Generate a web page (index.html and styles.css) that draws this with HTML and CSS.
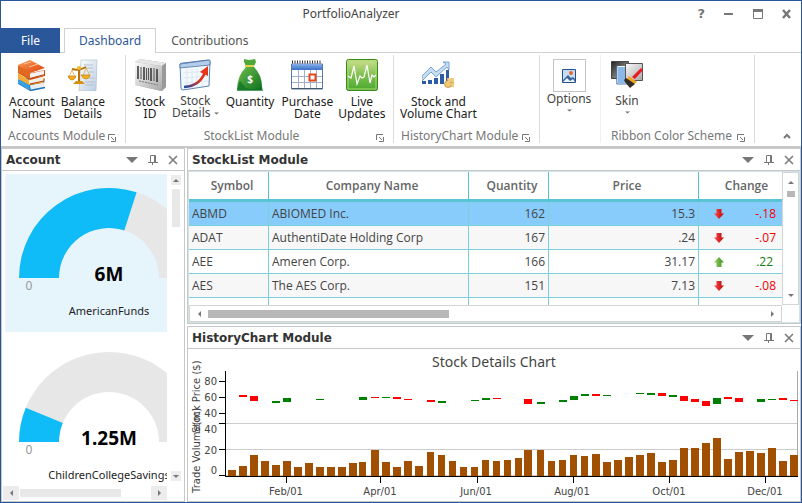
FILE: index.html
```html
<!DOCTYPE html>
<html lang="en">
<head>
<meta charset="utf-8">
<title>PortfolioAnalyzer</title>
<link rel="stylesheet" href="styles.css">
</head>
<body>
<svg class="defs" aria-hidden="true">
  <symbol id="launcher" viewBox="0 0 8 8"><path d="M0.5 6V0.5H7M3 3l3 3M7.5 3v4.500H3" fill="none" stroke="#777"/></symbol>
  <symbol id="tri" viewBox="0 0 12 6"><path d="M0 0h12L6 6z" fill="#777"/></symbol>
  <symbol id="pin" viewBox="0 0 10 10"><path d="M2.500 7V.5h5V7M6.500 1v6M0 7.500h10M4.500 7v3" fill="none" stroke="#777"/></symbol>
  <symbol id="cross" viewBox="0 0 10 10"><path d="M1 1l8 8M9 1l-8 8" fill="none" stroke="#777" stroke-width="1.500"/></symbol>
  <symbol id="up" viewBox="0 0 10 10"><path d="M2 7h6L5 4z" fill="#777"/></symbol>
  <symbol id="down" viewBox="0 0 10 10"><path d="M2 4h6L5 7z" fill="#777"/></symbol>
  <symbol id="left" viewBox="0 0 10 10"><path d="M7 2v6L4 5z" fill="#777"/></symbol>
  <symbol id="right" viewBox="0 0 10 10"><path d="M4 2v6l3-3z" fill="#777"/></symbol>
  <symbol id="fall" viewBox="0 0 10 10"><path d="M2.500 0h5v4.500H10L5 10 0 4.500h2.500z" fill="url(#redg)"/></symbol>
  <symbol id="rise" viewBox="0 0 10 10"><path d="M2.500 10h5V5.500H10L5 0 0 5.500h2.500z" fill="url(#greeng)"/></symbol>
  <defs>
    <linearGradient id="redg"><stop offset=".2" stop-color="#f04040"/><stop offset="1" stop-color="#b80000"/></linearGradient>
    <linearGradient id="greeng"><stop offset="0" stop-color="#98d060"/><stop offset="1" stop-color="#3c9020"/></linearGradient>
    <linearGradient id="orange" x2="1" y2="1"><stop offset="0" stop-color="#ffa060"/><stop offset="1" stop-color="#d84008"/></linearGradient>
    <linearGradient id="silver" x2="1" y2="1"><stop offset="0" stop-color="#fafafa"/><stop offset="1" stop-color="#a8a8a8"/></linearGradient>
    <linearGradient id="paper" x2="1" y2="1"><stop offset="0" stop-color="#fff"/><stop offset="1" stop-color="#b9cce0"/></linearGradient>
    <linearGradient id="bag" x2="1" y2="1"><stop offset="0" stop-color="#6cc04a"/><stop offset="1" stop-color="#0f7020"/></linearGradient>
    <linearGradient id="live" x2="0" y2="1"><stop offset="0" stop-color="#d0e090"/><stop offset=".5" stop-color="#80c050"/><stop offset="1" stop-color="#48a830"/></linearGradient>
    <linearGradient id="blue" x2="0" y2="1"><stop offset="0" stop-color="#86b0e8"/><stop offset="1" stop-color="#3c70c8"/></linearGradient>
    <linearGradient id="dark" x2="1" y2="1"><stop offset="0" stop-color="#222"/><stop offset="1" stop-color="#bbb"/></linearGradient>
    <linearGradient id="curve" x2="1" y1="1" y2="0"><stop offset="0" stop-color="#1c50a8"/><stop offset=".6" stop-color="#e03018"/></linearGradient>
  </defs>
</svg>

<div class="window">
  <header class="titlebar">
    <h1>PortfolioAnalyzer</h1>
    <div class="caption-buttons">
      <button aria-label="Help" class="help">?</button>
      <button aria-label="Minimize"><svg width="10" height="10"><path d="M0 5h9" stroke="#777" stroke-width="2"/></svg></button>
      <button aria-label="Maximize"><svg width="10" height="10"><path d="M.5.5h9v9h-9z" fill="none" stroke="#777"/><path d="M0 1.500h10" stroke="#777" stroke-width="3"/></svg></button>
      <button aria-label="Close"><svg width="10" height="10"><path d="M1 1l7 8M8 1L1 9" stroke="#777" stroke-width="2.500"/></svg></button>
    </div>
  </header>

  <nav class="tabs">
    <button class="tab file">File</button>
    <button class="tab active">Dashboard</button>
    <button class="tab">Contributions</button>
  </nav>

  <div class="ribbon">
    <section class="group g-accounts">
      <div class="tools">
        <button class="tool"><svg width="32" height="32" viewBox="0 0 32 32">
          <path d="M2 22l9-4 18 2-2 9-13 3-12-7z" fill="#2d86d8"/><path d="M14 26l14-3v6l-13 3z" fill="#e8eef2"/>
          <path d="M14 31.500l15-3M14 25.500l14-3" stroke="#2470b8" stroke-width="1.500"/>
          <path d="M2 15l11 7 16-3-2 5-14 2-11-6z" fill="#f2a420"/><path d="M13 20l14-3v6l-14 2z" fill="#f1eee6"/>
          <path d="M2 8l12 6 15-3v6l-15 4L2 14z" fill="#d84c10"/><path d="M14 14.500l14-3v5l-14 3z" fill="#f4f4f2"/>
          <path d="M2 6L14 1l15 8-15 5z" fill="url(#orange)"/><path d="M2 6l12 7v7L2 13z" fill="#e06a20"/>
          <path d="M2 14l11 7v4L2 19z" fill="#f4ae38"/><path d="M2 20l11 6v5L2 24z" fill="#3aa0e4"/>
          <path d="M14 19.500l15-4M14 25l14-3" stroke="#b83c08" stroke-width="1.200"/><path d="M8 5l7-2M13 8l9-3" stroke="#ffc490"/></svg>
          <span>Account<br>Names</span></button>
        <button class="tool"><svg width="32" height="32" viewBox="0 0 32 32">
          <path d="M14 1h16l-1 31H12z" fill="url(#paper)" stroke="#a8b8c8" stroke-width=".6"/>
          <path d="M17 6h9M17 9h9M22 13h5M22 19h5M18 23h9M18 26h8" stroke="#b4bfca"/>
          <path d="M12 8v16M5 10q7 2 14-2" fill="none" stroke="#b87408" stroke-width="2"/><circle cx="12" cy="9" r="2" fill="#f4b828"/>
          <path d="M6 25h12l-3-3h-6z" fill="#d89010"/><path d="M5 11l-3 7M5 11l3 7M19 9l-3 8M19 9l4 8" stroke="#d8a038" stroke-width=".7"/>
          <path d="M1 17h8q-1 4-4 4t-4-4zM14 16h9q-1 4-4 4t-5-4z" fill="#f4b020" stroke="#b87408" stroke-width=".6"/></svg>
          <span>Balance<br>Details</span></button>
      </div>
      <footer><span>Accounts Module</span><button class="launch" aria-label="Accounts options"><svg width="8" height="8"><use href="#launcher"/></svg></button></footer>
    </section>

    <section class="group g-stocks">
      <div class="tools">
        <button class="tool"><svg width="32" height="32" viewBox="0 0 32 32">
          <path d="M1 3l5-3 26 4v24l-5 4-26-6z" fill="#aaa"/><path d="M1 3l5-3 26 4-4 3z" fill="#e6e6e6"/><path d="M28 7l4-3v24l-4 4z" fill="#999"/>
          <path d="M1 3l27 4v25L1 26z" fill="url(#silver)"/>
          <path d="M4 7v13M10 8v13M17 9v13M23 10v13" stroke="#333" stroke-width="1.500"/><path d="M7 8v12M12.500 9v12M14.500 9v12M20 9v13" stroke="#555"/><path d="M5 22l19 4" stroke="#777" stroke-dasharray="2 1"/></svg>
          <span>Stock<br>ID</span></button>
        <button class="tool raised"><svg width="32" height="32" viewBox="0 0 32 32">
          <path d="M1 5q1-1 3-1l25-3q2 0 2 2l-1 24-26 4q-2 0-2-2z" fill="#f3f8fd" stroke="#5c84b4"/>
          <path d="M1 5l30-4v5L1 9z" fill="#b4cdea" stroke="#4c74a8" stroke-width=".8"/>
          <path d="M4 14l25-2M4 19l25-2M5 24l24-2M8 10v19M13 10v19M18 9v19M23 9v18" stroke="#d6e4f0" stroke-width=".8"/>
          <path d="M5 28Q21 27 26 13" fill="none" stroke="url(#curve)" stroke-width="2.500"/><path d="M21 13l8-6v10z" fill="#e83418"/></svg>
          <span>Stock<br>Details <svg class="arrow" width="5" height="3" viewBox="0 0 12 6"><use href="#tri"/></svg></span></button>
        <button class="tool"><svg width="32" height="32" viewBox="0 0 32 32">
          <path d="M10 0l5 1 6-1 1 3-3 6h-6l-3-6z" fill="#4fa83a"/><path d="M12 8h8q9 9 8 23H3Q3 17 12 8z" fill="url(#bag)"/>
          <path d="M11 7h9" stroke="#e8d050" stroke-width="2"/><path d="M3 31q1-5 3-9l6 7q8 3 16-1l1 4H3z" fill="#0c7424" opacity=".7"/>
          <text x="16" y="24" class="dollar">$</text></svg>
          <span>Quantity</span></button>
        <button class="tool"><svg width="32" height="32" viewBox="0 0 32 32">
          <path d="M.5 5h31v25H.5z" fill="#fff" stroke="#5878b0"/><path d="M1 5h30v6H1z" fill="url(#blue)"/>
          <path d="M1 29.500h30" stroke="#445868"/><path d="M1 17.500h30M1 23.500h30M7.500 11v18M13.500 11v18M19.500 11v18M25.500 11v18" stroke="#a0b0cc"/>
          <path d="M1 3h30" stroke="#333" stroke-width="3" stroke-dasharray="1 1.500"/><path d="M18.500 15.500h6v6h-6z" fill="#fff" stroke="#e04818" stroke-width="2"/></svg>
          <span>Purchase<br>Date</span></button>
        <button class="tool"><svg width="32" height="32" viewBox="0 0 32 32">
          <rect x=".5" y=".5" width="31" height="31" rx="2" fill="url(#live)" stroke="#388a18"/><path d="M2 2h28v28H2z" fill="none" stroke="#a8d870"/>
          <path d="M2 17l3 2 3-12 3 18 3-8 2 2 2-1 3-12 3 18 2-8 2 2 2-2" fill="none" stroke="#fff" stroke-width="1.200"/></svg>
          <span>Live<br>Updates</span></button>
      </div>
      <footer class="centered"><span>StockList Module</span><button class="launch" aria-label="Stock list options"><svg width="8" height="8"><use href="#launcher"/></svg></button></footer>
    </section>

    <section class="group g-history">
      <div class="tools">
        <button class="tool"><svg width="32" height="32" viewBox="0 0 32 32">
          <path d="M0 17l9-9 5 5 10-8-3-2h6v8l-2-3-11 10-5-5-9 9z" fill="#c8dcf0" stroke="#5c94cc" stroke-width=".8"/>
          <path d="M0 22h4v3H0zM6 21h4v4H6zM12 19h4v6h-4zM18 15h4v10h-4zM24 11h3v12h-3z" fill="#2c5ca8"/>
          <path d="M25 19h7v9h-7z" fill="#e0b050"/><circle cx="26" cy="25" r="3.500" fill="#ecc878" stroke="#b88428" stroke-width=".7"/><path d="M26 20h6M26 22h6M29 25h3M29 27h3" stroke="#fae8b0"/></svg>
          <span>Stock and<br>Volume Chart</span></button>
      </div>
      <footer><span>HistoryChart Module</span><button class="launch" aria-label="Chart options"><svg width="8" height="8"><use href="#launcher"/></svg></button></footer>
    </section>

    <section class="group g-options">
      <div class="tools">
        <button class="tool"><span class="frame"><svg width="14" height="14" viewBox="0 0 14 14"><path d="M.5.5h13v13H.5z" fill="#c8dcf4" stroke="#24508c"/><path d="M1 11l5-5 3 3 2-1 2 2v3H1z" fill="#38649c"/><path d="M1 13l4-4 3 3 3-2 2 3z" fill="#eef4fa"/><circle cx="9" cy="4" r="2" fill="#e86828"/></svg></span>
          <span>Options</span><svg class="below" width="5" height="3" viewBox="0 0 12 6"><use href="#tri"/></svg></button>
      </div>
    </section>

    <section class="group g-scheme">
      <div class="tools">
        <button class="tool raised"><svg width="32" height="32" viewBox="0 0 32 32">
          <path d="M.5 2.500h17v17H.5z" fill="url(#dark)" stroke="#444"/><path d="M6.500 7.500h14v17h-14z" fill="#8cb8e8" stroke="#f4f4f4"/><path d="M5.800 6.500v18.500h12" fill="none" stroke="#4878b0"/>
          <path d="M14.500 4.500h17v17h-17z" fill="url(#silver)" stroke="#555"/><path d="M30 9l2 2-8 9-3-2z" fill="#e81c24"/><path d="M18 17l8 6-3 2-7-5z" fill="#f4a420"/><path d="M15 19l9 6-5 4-5-6-1-2z" fill="#352c24"/></svg>
          <span>Skin</span><svg class="below" width="5" height="3" viewBox="0 0 12 6"><use href="#tri"/></svg></button>
      </div>
      <footer><span>Ribbon Color Scheme</span><button class="launch" aria-label="Color scheme options"><svg width="8" height="8"><use href="#launcher"/></svg></button></footer>
    </section>
    <button class="collapse" aria-label="Collapse ribbon"><svg width="8" height="6"><path d="M1 5l3-3 3 3" fill="none" stroke="#777" stroke-width="2"/></svg></button>
  </div>

  <main>
    <section class="pane account">
      <header><h2>Account</h2><div class="pane-buttons">
        <button aria-label="Menu"><svg width="12" height="6"><use href="#tri"/></svg></button><button aria-label="Pin"><svg width="10" height="10"><use href="#pin"/></svg></button><button aria-label="Close"><svg width="10" height="10"><use href="#cross"/></svg></button></div></header>
      <div class="account-body">
        <div class="gauges">
          <svg class="gauge selected" viewBox="5 174 162 158" width="162" height="158">
            <path d="M19 278A90 90 0 0 1 199 278H159A50 50 0 0 0 59 278z" fill="#e7e7e7"/>
            <path d="M19 278A90 90 0 0 1 136.600 192.300L124.300 230.400A50 50 0 0 0 59 278z" fill="#10bcf8"/>
            <text x="109" y="281" class="value">6M</text><text x="29" y="290" class="scale">0</text><text x="109" y="315" class="name">AmericanFunds</text></svg>
          <svg class="gauge" viewBox="5 338 162 158" width="162" height="158">
            <path d="M19 442A90 90 0 0 1 199 442H159A50 50 0 0 0 59 442z" fill="#e7e7e7"/>
            <path d="M19 442A90 90 0 0 1 25.800 407.800L62.800 423A50 50 0 0 0 59 442z" fill="#10bcf8"/>
            <text x="109" y="445" class="value">1.25M</text><text x="29" y="454" class="scale">0</text><text x="109" y="479" class="name">ChildrenCollegeSavings</text></svg>
        </div>
        <div class="vbar light"><button aria-label="Scroll up"><svg width="10" height="10"><use href="#up"/></svg></button><i class="thumb"></i><button aria-label="Scroll down"><svg width="10" height="10"><use href="#down"/></svg></button></div>
        <div class="hbar light"><button aria-label="Scroll left"><svg width="10" height="10"><use href="#left"/></svg></button><i class="thumb"></i><button aria-label="Scroll right"><svg width="10" height="10"><use href="#right"/></svg></button></div>
      </div>
    </section>

    <section class="pane">
      <header><h2>StockList Module</h2><div class="pane-buttons">
        <button aria-label="Menu"><svg width="12" height="6"><use href="#tri"/></svg></button><button aria-label="Pin"><svg width="10" height="10"><use href="#pin"/></svg></button><button aria-label="Close"><svg width="10" height="10"><use href="#cross"/></svg></button></div></header>
      <div class="grid-body">
        <div class="table-view">
          <table>
            <colgroup><col class="c-symbol"><col><col class="c-qty"><col class="c-price"><col class="c-change"></colgroup>
            <thead><tr><th>Symbol</th><th>Company Name</th><th>Quantity</th><th>Price</th><th>Change</th></tr></thead>
            <tbody>
              <tr class="current"><td>ABMD</td><td>ABIOMED Inc.</td><td class="num">162</td><td class="num">15.3</td><td><div class="change down"><svg width="10" height="10"><use href="#fall"/></svg>-.18</div></td></tr>
              <tr><td>ADAT</td><td>AuthentiDate Holding Corp</td><td class="num">167</td><td class="num">.24</td><td><div class="change down"><svg width="10" height="10"><use href="#fall"/></svg>-.07</div></td></tr>
              <tr><td>AEE</td><td>Ameren Corp.</td><td class="num">166</td><td class="num">31.17</td><td><div class="change up"><svg width="10" height="10"><use href="#rise"/></svg>.22</div></td></tr>
              <tr><td>AES</td><td>The AES Corp.</td><td class="num">151</td><td class="num">7.13</td><td><div class="change down"><svg width="10" height="10"><use href="#fall"/></svg>-.08</div></td></tr>
              <tr><td></td><td></td><td></td><td></td><td></td></tr>
            </tbody>
          </table>
        </div>
        <div class="vbar boxed"><button aria-label="Scroll up"><svg width="10" height="10"><use href="#up"/></svg></button><i class="thumb"></i><button aria-label="Scroll down"><svg width="10" height="10"><use href="#down"/></svg></button></div>
        <div class="hbar boxed"><button aria-label="Scroll left"><svg width="10" height="10"><use href="#left"/></svg></button><i class="thumb"></i><button aria-label="Scroll right"><svg width="10" height="10"><use href="#right"/></svg></button></div>
      </div>
    </section>

    <section class="pane">
      <header><h2>HistoryChart Module</h2><div class="pane-buttons">
        <button aria-label="Menu"><svg width="12" height="6"><use href="#tri"/></svg></button><button aria-label="Pin"><svg width="10" height="10"><use href="#pin"/></svg></button><button aria-label="Close"><svg width="10" height="10"><use href="#cross"/></svg></button></div></header>
      <svg class="chart" viewBox="188 349 612 152">
        <path d="M226 423.500H797M226 449.500H797M226 475.500H797" stroke="#ccc"/><path d="M797.500 371V476" stroke="#aaa"/>
        <g id="bars" fill="#a05000"></g><g id="candles"></g>
        <path d="M225.500 371V477M225 476.500H798M219 381.500h7M219 397.500h7M219 413.500h7M219 423.500h7M219 449.500h7M219 475.500h7M286.500 477v6M380.500 477v6M477.500 477v6M573.500 477v6M669.500 477v6M765.500 477v6" stroke="#000"/>
        <text x="494" y="367" class="chart-title">Stock Details Chart</text>
        <g class="y-labels"><text x="217" y="385">80</text><text x="217" y="401">60</text><text x="217" y="417">40</text><text x="217" y="433">40</text><text x="217" y="454">20</text><text x="217" y="474">0</text></g>
        <g class="x-labels"><text x="286" y="495">Feb/01</text><text x="380" y="495">Apr/01</text><text x="476" y="495">Jun/01</text><text x="572" y="495">Aug/01</text><text x="669" y="495">Oct/01</text><text x="765" y="495">Dec/01</text></g>
        <g class="axis-titles"><text transform="translate(200 433) rotate(-90)">Stock Price ($)</text><text transform="translate(200 493) rotate(-90)">Trade Volume(m)</text></g>
      </svg>
    </section>
  </main>
</div>
<script src="chart.js"></script>
</body>
</html>
```
FILE: styles.css
```css
* { box-sizing: border-box; }
body { margin: 0; font: 12px/12px "Noto Sans", sans-serif; color: #333; background: #fff; }
button { border: 0; padding: 0; margin: 0; background: none; font: inherit; color: inherit; }
h1, h2 { margin: 0; font-size: 12px; }
svg { display: block; flex: none; }
.defs { position: absolute; width: 0; height: 0; }
.window { height: 100vh; min-height: 400px; display: flex; flex-direction: column; border: 1px solid #2a579a; }

.titlebar { height: 26px; display: grid; grid-template-columns: 120px 1fr 120px; align-items: center; }
.titlebar h1 { grid-column: 2; text-align: center; font-weight: 400; color: #444; padding-right: 100px; }
.caption-buttons { display: flex; justify-content: flex-end; gap: 19px; padding-right: 9px; }
.caption-buttons .help { font: bold 13px/10px "DejaVu Sans", sans-serif; color: #777; }

.tabs { display: flex; height: 26px; padding-top: 1px; border-bottom: 1px solid #d0d0d0; }
.tab { padding: 0 14px; height: 25px; color: #555; border: 1px solid transparent; border-bottom: 0; }
.tab.file { width: 59px; background: #2a579a; color: #fff; margin-right: 4px; }
.tab.active { color: #2a579a; background: #fff; border-color: #d0d0d0; }

.ribbon { height: 95px; display: flex; border-bottom: 2px solid #c8c8c8; }
.group { margin: 2px 0 3px; padding: 4px 5px 0; display: flex; flex-direction: column; justify-content: space-between; border-right: 1px solid #dcdcdc; }
.g-accounts { width: 125px; }
.g-stocks { width: 268px; }
.g-history { width: 146px; }
.g-options { width: 61px; border-color: #f0f0f0; }
.g-scheme { width: 154px; }
.g-options .tools { justify-content: center; }
.g-history .tool { padding: 0 1px; }
.g-stocks .tools { padding-left: 1px; gap: 2px; }
.g-stocks .tool { padding: 0 2px; }
.g-stocks .tool + .tool { padding: 0 3px 0 2px; }
.g-stocks .tool:last-child { padding: 0; }
.g-options .tools { padding-right: 2px; }
.g-scheme .tools { padding-left: 2px; }
.tools { display: flex; align-items: flex-start; }
.tool { display: flex; flex-direction: column; align-items: center; gap: 5px; padding: 0 3px; color: #222; white-space: nowrap; }
.raised { gap: 4px; color: #444; }
.arrow { display: inline-block; vertical-align: 2px; }
.frame { width: 33px; height: 33px; border: 1px solid #c4c4c4; display: flex; align-items: center; justify-content: center; }
.g-options .tool { gap: 1px; color: #444; }
.g-options .below { margin-top: 3px; }
.group footer { display: flex; justify-content: space-between; align-items: flex-start; padding: 0 2px; color: #777; height: 13px; white-space: nowrap; }
.launch { padding: 4px 2px 0; }
.g-scheme footer { padding-left: 5px; }
.centered span { flex: 1; text-align: center; padding-right: 4px; }
.collapse { margin-left: auto; align-self: flex-end; padding: 0 10px 7px; }

main { flex: 1; min-height: 0; display: grid; grid-template: 1fr 1fr / 184px 1fr; gap: 2px; }
.pane { min-height: 0; min-width: 0; border: 1px solid #c8c8c8; display: flex; flex-direction: column; background: #fff; overflow: hidden; }
.account { grid-row: span 2; }
.pane > header { height: 22px; flex: none; display: flex; align-items: center; justify-content: space-between; border-bottom: 1px solid #c8c8c8; padding: 0 6px 0 4px; }
.pane h2 { font: bold 12px/14px "DejaVu Sans", sans-serif; color: #333; }
.pane-buttons { display: flex; align-items: center; gap: 10px; }

.account-body { flex: 1; min-height: 0; display: grid; grid-template: 1fr 17px / 1fr 17px; padding: 3px 0 0 3px; }
.gauges { overflow: hidden; min-height: 0; display: flex; flex-direction: column; gap: 6px; }
.selected { background: #e6f4fc; }
.gauge text { text-anchor: middle; }
.gauge .value { font-size: 19px; font-weight: 700; fill: #000; }
.gauge .scale { fill: #999; }
.gauge .name { font-size: 11px; fill: #222; }

.vbar { display: flex; flex-direction: column; align-items: center; }
.hbar { display: flex; align-items: center; }
.vbar button:last-child { margin-top: auto; }
.hbar button:last-child { margin-left: auto; }
.light button { background: #ececec; }
.light .thumb { background: #e8e8e8; }
.vbar.light { padding: 1px 0 3px; }
.vbar.light .thumb { width: 8px; height: 38px; margin-top: 4px; }
.hbar.light { margin-left: -2px; }
.hbar.light button { padding: 2px 3px; }
.hbar.light .thumb { width: 101px; height: 8px; margin-left: 1px; }
.boxed { border: 1px solid #d4d4d4; }
.boxed .thumb { background: #b8b8b8; }
.vbar.boxed { padding: 4px 0; }
.vbar.boxed .thumb { width: 8px; height: 6px; margin-top: 4px; }
.hbar.boxed { padding: 0 4px; }
.hbar.boxed .thumb { width: 241px; height: 8px; margin-left: 4px; }

.grid-body { flex: 1; min-height: 0; display: grid; grid-template: 1fr 17px / 1fr 17px; border: 1px solid #cfe4e4; }
.table-view { overflow: hidden; min-height: 0; }
table { width: calc(100% + 6px); table-layout: fixed; border-collapse: separate; border-spacing: 0; color: #444; font-family: "Open Sans", sans-serif; }
.c-symbol { width: 80px; }
.c-qty { width: 80px; }
.c-price { width: 150px; }
.c-change { width: 89px; }
th { height: 30px; padding: 0 0 0 7px; font-weight: 600; color: #666; border-right: 1px solid #58c0d0; border-bottom: 3px solid #58c4d4; }
td { height: 24px; padding: 0 3px; border-right: 1px solid #7cd0d8; border-bottom: 1px solid #7cd0d8; }
tr:nth-child(even) td { background: #f7f7f7; }
tr.current td { background: #88ccfc; }
.num { text-align: right; }
.change { display: flex; justify-content: space-between; align-items: center; padding: 0 8px 0 12px; }
.change.down { color: #f00000; }
.change.up { color: #108010; padding-right: 11px; }

.chart { width: 100%; flex: 1; min-height: 0; font: 10px "DejaVu Sans", sans-serif; fill: #444; }
.chart-title { font: 14px "Noto Sans", sans-serif; text-anchor: middle; }
.y-labels { text-anchor: end; }
.x-labels { text-anchor: middle; }
.dollar { font: bold 10px "Noto Sans", sans-serif; fill: #fff; text-anchor: middle; }
```
FILE: chart.js
```js
// Volume bars: [left, top, width]; every bar stands on the time axis.
const bars = [[228,470,8],[239,466,8],[250,455,8],[261,461,8],[272,465,8],[283,461,8],[294,467,8],[305,463,8],[316,467,8],[327,467,8],[338,467,8],[349,463,8],[359,462,7],[371,450,8],[382,462,8],[393,467,8],[404,461,8],[415,466,8],[427,452,7],[438,455,7],[449,461,7],[460,467,7],[471,467,7],[482,460,7],[493,461,7],[504,460,7],[515,458,7],[524,450,8],[537,450,7],[548,461,7],[559,460,7],[570,455,7],[581,456,7],[592,454,8],[603,462,8],[614,460,8],[625,457,8],[636,455,8],[647,453,8],[658,462,8],[669,460,8],[680,448,8],[691,448,8],[702,443,8],[713,438,8],[724,459,8],[735,452,8],[746,451,8],[757,453,8],[768,448,8],[779,461,8],[790,455,8]];
// Price candles: [left, top, height, rising]
const candles = [[239,395,2,0],[250,396,5,0],[272,401,2,1],[283,398,4,1],[316,399,1,1],[359,397,3,1],[371,397,1,0],[382,397,1,1],[393,397,2,0],[404,399,1,0],[427,400,2,0],[438,401,2,1],[471,400,1,1],[482,398,2,1],[493,398,1,0],[524,399,5,0],[537,402,2,1],[559,400,2,1],[570,396,4,1],[581,394,2,1],[592,394,2,0],[603,395,1,1],[636,393,1,1],[647,393,2,1],[658,393,3,0],[669,395,2,1],[680,396,5,0],[691,399,3,0],[702,401,5,0],[713,398,6,1],[724,397,2,0],[735,398,4,0],[757,399,3,1],[768,399,1,1],[779,398,2,0],[790,400,1,0]];
function rect(parent, x, y, w, h, fill) {
  const r = document.createElementNS("http://www.w3.org/2000/svg", "rect");
  r.setAttribute("x", x); r.setAttribute("y", y);
  r.setAttribute("width", w); r.setAttribute("height", h);
  if (fill) r.setAttribute("fill", fill);
  parent.appendChild(r);
}
const barLayer = document.getElementById("bars");
const candleLayer = document.getElementById("candles");
bars.forEach(([x, y, w]) => rect(barLayer, x, y, w, 476 - y));
candles.forEach(([x, y, h, up]) => rect(candleLayer, x, y, 8, h, up ? "#008000" : "#ff0000"));
```
